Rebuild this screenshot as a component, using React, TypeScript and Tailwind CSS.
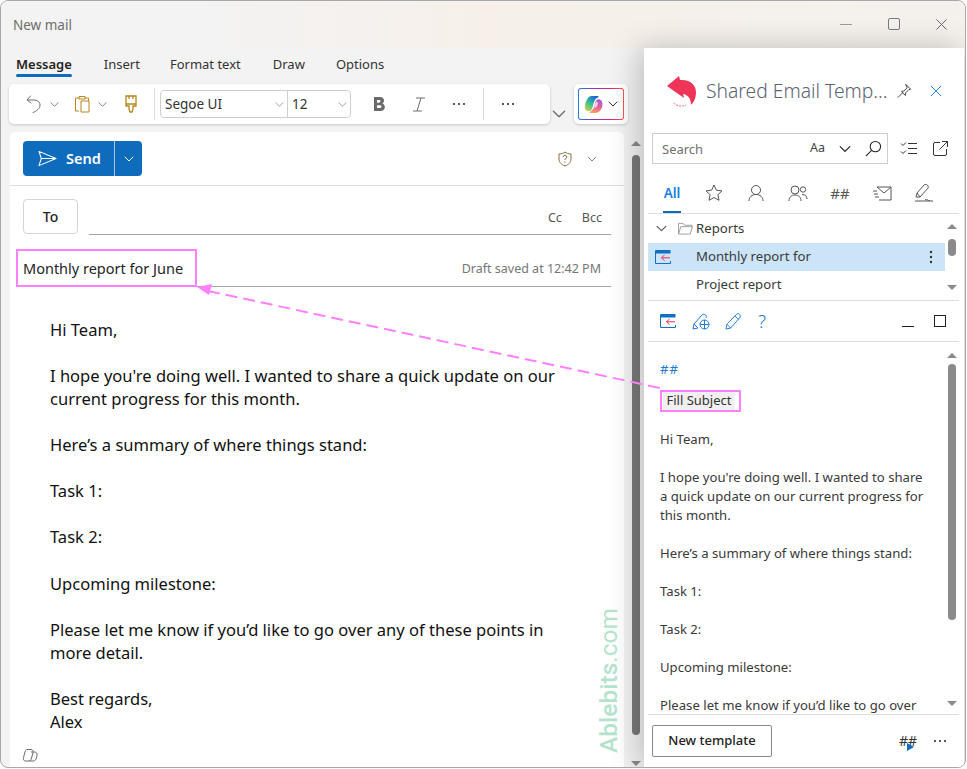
import React from "react";

const font = "font-['Noto_Sans','Open_Sans',sans-serif]";

const Chevron = ({ className = "", size = 10, color = "#707070" }: { className?: string; size?: number; color?: string }) => (
  <svg viewBox="0 0 10 10" width={size} height={size} className={className} fill="none" stroke={color} strokeWidth="1">
    <path d="m1 3 4 4 4-4" strokeLinecap="round" strokeLinejoin="round" />
  </svg>
);

const Logo = () => (
  <svg viewBox="0 0 32 34" width="32" height="34">
    <path d="M1 12 13 2l1 4c10-1 16 5 16 12 0 6-2 10-5 13 0-5-2-10-8-11l1 4Z" fill="#ee3558" />
    <path d="M8 29c2 3 8 4 12 2" fill="none" stroke="#f28a9c" strokeWidth="1.200" strokeDasharray="2 1" />
  </svg>
);

const Copilot = () => (
  <svg viewBox="0 0 20 20" width="19" height="19">
    <defs>
      <linearGradient id="cpa" x1="0" y1="1" x2="0.7" y2="0">
        <stop offset="0" stopColor="#e8d23a" />
        <stop offset="0.5" stopColor="#38c28e" />
        <stop offset="1" stopColor="#1666d8" />
      </linearGradient>
      <linearGradient id="cpb" x1="0.6" y1="0" x2="0.4" y2="1">
        <stop offset="0" stopColor="#a855d8" />
        <stop offset="0.55" stopColor="#e8629a" />
        <stop offset="1" stopColor="#f7a15a" />
      </linearGradient>
    </defs>
    <path d="M8 1h6c1.500 0 2 1 1 1.500-3 .5-4.500 4-5.500 8.500-.7 3-2 6-4.500 6-3 0-4.500-2.500-4-5.500C1.500 7 4 1 8 1Z" fill="url(#cpa)" />
    <path d="M15 4.500c2.500 0 4.500 2 4.500 5 0 5-3.500 9.500-7.500 9.500H7c-1 0-1.300-1-.5-1.500 3-1.500 4-4 5-8 .5-2.500 1.500-5 3.500-5Z" fill="url(#cpb)" />
    <path d="M12.500 7.500c1-1 2.500 0 2 2-.6 2.500-2 4.500-3.500 4 0-2 .8-4.500 1.500-6Z" fill="#fff" opacity="0.75" />
  </svg>
);

const TemplateIcon = () => (
  <svg viewBox="0 0 16 15" width="16" height="15" fill="none">
    <path d="M.5 13.500V.5h15M.5 13.500h15V11" stroke="#1170c4" />
    <path d="M.5 1h15v2.500H.5Z" fill="#1170c4" />
    <path d="M15 7.800H6.500M9.500 5 6.500 7.800l3 2.800" stroke="#e8344f" />
  </svg>
);

const Dots = ({ color = "#333" }: { color?: string }) => (
  <svg viewBox="0 0 14 4" width="14" height="4" fill={color}>
    <circle cx="2" cy="2" r="1.100" />
    <circle cx="7" cy="2" r="1.100" />
    <circle cx="12" cy="2" r="1.100" />
  </svg>
);

function Toolbar() {
  return (
    <div className="flex items-start pl-[8px] pr-[16px]">
      <div className="flex h-[40px] w-[541px] items-center rounded-[5px] bg-white shadow-[0_1px_3px_rgba(0,0,0,0.18)]">
        <svg viewBox="0 0 16 18" width="16" height="18" className="ml-[17px]" fill="none" stroke="#6e6e6e" strokeWidth="1">
          <path d="M4.500 1 1 5l4 3M1.500 5H8c3 0 6 1.500 6 5 0 3.500-3 6-7 7.500" strokeLinecap="round" strokeLinejoin="round" />
        </svg>
        <Chevron className="ml-[8px]" size={9} />
        <svg viewBox="0 0 15 18" width="15" height="18" className="ml-[16px]" fill="none" stroke="#b8861a" strokeWidth="1">
          <path d="M4 3H.5v13H4M10 3h3.500v3M4 1.500h6V4H4Z" />
          <path d="M6 6h8v11H6Z" />
        </svg>
        <Chevron className="ml-[8px]" size={9} />
        <svg viewBox="0 0 12 18" width="12" height="18" className="ml-[18px]" fill="none" stroke="#b8861a" strokeWidth="1.300">
          <path d="M1 1h10v8H1ZM4 1v3M8 1v3M1 9v2h3v3l1 3h2l1-3v-3h3V9" />
        </svg>
        <div className="ml-[17px] h-[32px] w-px bg-[#dcdcdc]" />
        <div className="ml-[5px] flex h-[28px] w-[191px] items-center rounded-[4px] border border-[#cfcfcf]">
          <div className="flex h-full w-[127px] items-center justify-between border-r border-[#cfcfcf] pl-[4px] pr-[3px] text-[13.500px] text-[#333]">
            Segoe UI
            <Chevron size={9} color="#9a9a9a" />
          </div>
          <div className="flex h-full flex-1 items-center justify-between pl-[4px] pr-[3px] text-[13.500px] text-[#333]">
            12
            <Chevron size={9} color="#9a9a9a" />
          </div>
        </div>
        <svg viewBox="0 0 12 14" width="12" height="14" className="ml-[22px]" fill="#6a6a6a">
          <path fillRule="evenodd" d="M1 0h5.500C9.500 0 11 1.400 11 3.500c0 1.200-.6 2.300-1.500 2.900 1.300.6 2.300 1.900 2.300 3.500 0 2.500-1.800 4.100-4.500 4.100H1Zm3 3v2.700h2c.9 0 1.500-.6 1.500-1.400S6.900 3 6 3Zm0 5.200V11h3c1 0 1.600-.6 1.600-1.400 0-.8-.6-1.400-1.600-1.400Z" />
        </svg>
        <svg viewBox="0 0 14 15" width="14" height="15" className="ml-[27px]" fill="none" stroke="#6e6e6e" strokeWidth="1">
          <path d="M4 1h9M1 14h9M9 1 5 14" />
        </svg>
        <div className="ml-[26px] flex"><Dots /></div>
        <div className="ml-[17px] h-[32px] w-px bg-[#dcdcdc]" />
        <div className="ml-[17px] flex"><Dots /></div>
      </div>
      <Chevron className="ml-[2px] mt-[23px]" size={14} />
      <div className="ml-[8px] grid h-[40px] w-[54px] place-items-center rounded-[5px] bg-white shadow-[0_1px_3px_rgba(0,0,0,0.18)]">
        <div className="h-[32px] w-[46px] rounded-[3px] bg-[linear-gradient(90deg,#1b80e0,#7d3bc0,#d4247e,#f25c4a)] p-px">
          <div className="flex h-full items-center gap-[5px] rounded-[2px] bg-white pl-[5px]">
            <Copilot />
            <Chevron size={10} color="#333" />
          </div>
        </div>
      </div>
    </div>
  );
}

const bodyLines = [
  "Hi Team,",
  "",
  "I hope you're doing well. I wanted to share a quick update on our",
  "current progress for this month.",
  "",
  "Here’s a summary of where things stand:",
  "",
  "Task 1:",
  "",
  "Task 2:",
  "",
  "Upcoming milestone:",
  "",
  "Please let me know if you’d like to go over any of these points in",
  "more detail.",
  "",
  "Best regards,",
  "Alex",
];

function MessageCard() {
  return (
    <div className="relative mt-[8px] ml-[9px] flex h-[636px] w-[614px] flex-col rounded-t-[5px] bg-white">
      <div className="flex h-[54px] items-center border-b border-[#dedede] pl-[13px] pr-[27px]">
        <div className="flex h-[35px] w-[119px] rounded-[4px] bg-[#0f6cbd] text-white">
          <div className="flex flex-1 items-center gap-[9px] border-r border-[#a8c8e6] pl-[15px] text-[14.500px] font-semibold">
            <svg viewBox="0 0 20 17" width="19" height="17" fill="none" stroke="#fff" strokeWidth="1.100">
              <path d="M1 1 19 8.500 1 16l2.500-7.500Zm2.500 7.500H19" strokeLinejoin="round" />
            </svg>
            Send
          </div>
          <div className="grid w-[27px] place-items-center">
            <Chevron size={10} color="#fff" />
          </div>
        </div>
        <div className="flex-1" />
        <svg viewBox="0 0 14 16" width="14" height="16" fill="none">
          <path d="M7 1c1.500 1.200 3.500 2 6 2v5c0 3.500-2.500 5.700-6 7-3.500-1.300-6-3.500-6-7V3c2.500 0 4.500-.8 6-2Z" stroke="#8a6d3b" />
          <path d="M5.300 6c0-2.200 3.500-2.200 3.500 0 0 1.300-1.800 1.300-1.800 2.800M7 10.500v1" stroke="#555" />
        </svg>
        <Chevron className="ml-[15px]" size={10} color="#6b87b0" />
      </div>

      <div className="flex h-[50px] items-start px-[13px] pt-[13px]">
        <div className="grid h-[35px] w-[55px] place-items-center rounded-[4px] border border-[#d4d4d4] text-[14px] font-medium text-[#242424]">
          To
        </div>
        <div className="ml-[11px] flex h-[36px] flex-1 items-center justify-end gap-[20px] border-b border-[#a5a5a5] pr-[9px] pt-[4px] text-[12.500px] text-[#555]">
          <span>Cc</span>
          <span>Bcc</span>
        </div>
      </div>

      <div className="mx-[13px] mt-[10px] flex h-[41px] items-center justify-between border-b border-[#a5a5a5] pr-[10px] pt-[6px]">
        <span className="text-[14.500px] text-[#242424]">Monthly report for June</span>
        <span className="pt-[1px] text-[12.500px] text-[#767676]">Draft saved at 12:42 PM</span>
      </div>

      <div className="pl-[40px] pt-[31px] text-[16.550px] leading-[23px] text-[#111]">
        {bodyLines.map((l, i) => (
          <div key={i} className="h-[23.050px] whitespace-nowrap">{l}</div>
        ))}
      </div>

      <svg viewBox="0 0 16 16" width="16" height="16" className="absolute bottom-[5px] left-[12px]" fill="none" stroke="#6a6a6a">
        <path d="M5 2.500h4c2 0 2.500 2 2 3.500l-2 6.500c-.4 1-1.500 1.500-2.500 1.500H3.500C1.500 14 1 12 1.500 10.500L3 5c.3-1.500 1-2.500 2-2.500Z" />
        <path d="M9 5h3.500c2 0 3 1.500 2.500 3.500l-1 3.500c-.4 1.200-1.500 2-2.500 2H7" />
      </svg>
    </div>
  );
}

const Scrollbar = ({ thumb, className = "" }: { thumb: string; className?: string }) => (
  <div className={`flex flex-col items-center ${className}`}>
    <div className="h-0 w-0 border-x-[5px] border-b-[5px] border-x-transparent border-b-[#8a8a8a]" />
    <div className={`w-[8px] rounded-full bg-[#8a8a8a] ${thumb}`} />
    <div className="flex-1" />
    <div className="h-0 w-0 border-x-[5px] border-t-[5px] border-x-transparent border-t-[#8a8a8a]" />
  </div>
);

const panelLines = [
  "Hi Team,",
  "",
  "I hope you're doing well. I wanted to share",
  "a quick update on our current progress for",
  "this month.",
  "",
  "Here’s a summary of where things stand:",
  "",
  "Task 1:",
  "",
  "Task 2:",
  "",
  "Upcoming milestone:",
  "",
  "Please let me know if you’d like to go over",
];

function SidePanel() {
  return (
    <div className="relative flex h-[720px] w-[320px] shrink-0 flex-col bg-white text-[#3a3a3a] shadow-[-6px_0_28px_rgba(0,0,0,0.22)]">
      {/* header */}
      <div className="flex h-[85px] items-center">
        <div className="ml-[22px] mt-[1px]"><Logo /></div>
        <span className="ml-[8px] w-[190px] whitespace-nowrap text-[19.300px] font-light leading-none text-[#5a6472]">
          Shared Email Temp...
        </span>
        <svg viewBox="0 0 18 18" width="16" height="16" fill="none" stroke="#333">
          <path d="M11 1.500 16.500 7l-2 .5-3.500 3.500-.5 3L6 9.500l3-.5 3.500-3.500ZM7.500 11 2 16.500" strokeLinejoin="round" />
        </svg>
        <svg viewBox="0 0 14 14" width="12" height="12" className="ml-[18px]" fill="none" stroke="#1f7ad0" strokeWidth="1.100">
          <path d="m1 1 12 12M13 1 1 13" />
        </svg>
      </div>

      {/* search */}
      <div className="flex items-center pl-[8px]">
        <div className="flex h-[31px] w-[236px] items-center border border-[#cdcdcd] pl-[9px] pr-[5px] text-[13px]">
          <span className="pt-[2px] text-[#707070]">Search</span>
          <div className="flex-1" />
          <span className="text-[12.500px] text-[#444]">Aa</span>
          <Chevron className="ml-[14px]" size={12} color="#222" />
          <svg viewBox="0 0 18 18" width="17" height="17" className="ml-[14px]" fill="none" stroke="#222" strokeWidth="1.100">
            <circle cx="11" cy="7" r="5.500" />
            <path d="M7 11 1 17" />
          </svg>
        </div>
        <svg viewBox="0 0 17 15" width="17" height="15" className="ml-[12px]" fill="none" stroke="#333">
          <path d="m1 2.500 2 2 3-3M1 10.500l2 2 3-3M8 2.500h9M8 7.500h9M8 12.500h9" />
        </svg>
        <svg viewBox="0 0 15 15" width="15" height="15" className="ml-[16px]" fill="none" stroke="#333">
          <path d="M7 1.500H2A1.500 1.500 0 0 0 .5 3v10A1.500 1.500 0 0 0 2 14.500h10a1.500 1.500 0 0 0 1.500-1.500V8M9 .5h5.500V6M14.500.5l-8 8" />
        </svg>
      </div>

      {/* category tabs */}
      <div className="ml-[4px] mt-[13px] flex h-[37px] w-[311px] items-center border-b border-[#dedede] pb-[4px] pl-[3px] text-[#555] [&>*]:flex [&>*]:w-[42px] [&>*]:justify-center">
        <div className="relative text-[13.500px] font-semibold text-[#1480e0]">
          All
          <span className="absolute bottom-[-10px] left-[12px] h-[2px] w-[18px] bg-[#0f6cbd]" />
        </div>
        <div>
          <svg viewBox="0 0 18 18" width="18" height="18" fill="none" stroke="#555">
            <path d="m9 1 2.400 5.200 5.600.7-4.100 3.800 1.100 5.600L9 13.500l-5 2.800 1.100-5.600L1 6.900l5.600-.7Z" strokeLinejoin="round" />
          </svg>
        </div>
        <div>
          <svg viewBox="0 0 18 18" width="18" height="18" fill="none" stroke="#555">
            <circle cx="9" cy="6" r="4.500" />
            <path d="M2 17c0-4 3-6.500 7-6.500S16 13 16 17" />
          </svg>
        </div>
        <div>
          <svg viewBox="0 0 20 18" width="20" height="18" fill="none" stroke="#555">
            <circle cx="7" cy="6" r="4" />
            <path d="M1 17c0-4 2.500-6 6-6s6 2 6 6" />
            <circle cx="15" cy="5.500" r="2.700" />
            <path d="M14 10.500c3 0 5 1.500 5 4.500" />
          </svg>
        </div>
        <div className="text-[15px]">##</div>
        <div>
          <svg viewBox="0 0 20 16" width="20" height="16" fill="none" stroke="#555">
            <path d="M5 2h14v13H7M5 2l7 6 7-6M1 6h4M2 9h4M3 12h4" />
          </svg>
        </div>
        <div>
          <svg viewBox="0 0 20 18" width="20" height="18" fill="none" stroke="#555">
            <path d="m2 13 1-4 7-8c1-.8 2.500-.8 3.500.2s1 2.400 0 3.500L6 13ZM3 9l3 4M1 17h18M11 15c1 2 2 0 3 1s1 1 2 0" />
          </svg>
        </div>
      </div>

      {/* template tree */}
      <div className="ml-[4px] flex h-[87px] w-[311px] border-b border-[#dedede]">
        <div className="w-[297px] shrink-0 text-[13.200px]">
          <div className="flex h-[29px] items-center pl-[8px]">
            <Chevron size={11} color="#555" />
            <svg viewBox="0 0 16 14" width="15" height="13" className="ml-[11px]" fill="none" stroke="#999">
              <path d="M.5 13V1.500h5l1.500 2h8V5M.5 13l2.500-8h12.500l-2.500 8Z" />
            </svg>
            <span className="ml-[3px]">Reports</span>
          </div>
          <div className="flex h-[28px] items-center bg-[#cce4f7] pl-[7px] pr-[12px]">
            <TemplateIcon />
            <span className="ml-[25px]">Monthly report for</span>
            <div className="flex-1" />
            <svg viewBox="0 0 4 14" width="4" height="14" fill="#333">
              <circle cx="2" cy="2" r="1.200" />
              <circle cx="2" cy="7" r="1.200" />
              <circle cx="2" cy="12" r="1.200" />
            </svg>
          </div>
          <div className="flex h-[28px] items-center pl-[48px]">Project report</div>
        </div>
        <Scrollbar thumb="mt-[10px] h-[17px]" className="ml-[1px] w-[12px] pb-[10px] pt-[10px]" />
      </div>

      {/* actions */}
      <div className="ml-[4px] flex h-[41px] w-[311px] items-center border-b border-[#dedede]">
        <div className="ml-[12px]"><TemplateIcon /></div>
        <svg viewBox="0 0 18 18" width="18" height="18" className="ml-[16px]" fill="none" stroke="#1f7ad0">
          <path d="m1 17 1-5 8-9c1-1 2.500-1 3.500 0s1 2 .5 3M1 17l5-1M2 12l4 4" />
          <circle cx="12.500" cy="12.500" r="4.500" />
          <path d="M8 12.500h9M12.500 8v9" />
        </svg>
        <svg viewBox="0 0 18 18" width="17" height="17" className="ml-[15px]" fill="none" stroke="#1f7ad0">
          <path d="m1 17 1-5 10-10.500c1-1 2.500-1 3.500 0s1 2.500 0 3.500L6 16ZM2 12l4 4M10.500 3l4 4" />
        </svg>
        <span className="ml-[16px] text-[19px] font-light text-[#1f7ad0]">?</span>
        <div className="flex-1" />
        <div className="mr-[20px] mt-[11px] h-px w-[12px] bg-[#222]" />
        <div className="mr-[13px] h-[12px] w-[12px] border border-[#222]" />
      </div>

      {/* preview */}
      <div className="ml-[4px] flex h-[373px] w-[311px] overflow-hidden border-b border-[#dedede]">
        <div className="w-[298px] shrink-0 pl-[12px] text-[13.150px] leading-[19px] text-[#3a3a3a]">
          <div className="mt-[18px] h-[19px] tracking-[1px] text-[#1f7ad0]">##</div>
          <div className="ml-[3px] mt-[12px] flex h-[19px] w-[72px] items-center justify-center whitespace-nowrap bg-[#f0f0f0] text-[13px] text-[#333]">
            Fill Subject
          </div>
          <div className="mt-[20px]">
            {panelLines.map((l, i) => (
              <div key={i} className="h-[19px] whitespace-nowrap">{l}</div>
            ))}
          </div>
        </div>
        <Scrollbar thumb="mt-[6px] h-[256px]" className="w-[12px] pb-[8px] pt-[11px]" />
      </div>

      {/* footer */}
      <div className="flex h-[52px] items-center pl-[8px]">
        <div className="grid h-[32px] w-[120px] place-items-center rounded-[2px] border border-[#8a8a8a] text-[13px] font-medium text-[#222]">
          New template
        </div>
        <div className="relative ml-[127px] text-[14px] leading-none text-[#333]">
          ##
          <div className="absolute bottom-[-3px] left-[8px] h-0 w-0 border-y-[4px] border-l-[7px] border-y-transparent border-l-[#0f6cbd]" />
        </div>
        <div className="ml-[16px] flex"><Dots /></div>
      </div>
    </div>
  );
}

export default function App() {
  return (
    <div className={`relative h-[769px] w-[967px] overflow-hidden bg-white ${font}`}>
      <div className="flex h-[768px] w-[966px] flex-col overflow-hidden rounded-[8px] border border-[#a8a8a8] bg-[#f3f3f3]">
        {/* title bar */}
        <div className="flex h-[47px] shrink-0 items-start bg-[linear-gradient(90deg,#f3f3f3_20%,#f7f0ea_50%,#f4f1ec_100%)] pl-[12px] pt-[15px]">
          <span className="text-[13.500px] leading-[18px] text-[#6d6d6d]">New mail</span>
          <div className="flex-1" />
          <div className="mr-[18px] flex items-center gap-[36px] pt-[2px]">
            <div className="h-px w-[12px] bg-[#9a9a9a]" />
            <div className="h-[12px] w-[12px] rounded-[2px] border border-[#7a7a7a]" />
            <svg viewBox="0 0 11 11" width="11" height="11" fill="none" stroke="#666">
              <path d="m.5.500 10 10M10.500.500l-10 10" />
            </svg>
          </div>
        </div>

        <div className="flex min-h-0 flex-1">
          {/* compose column */}
          <div className="w-[643px] shrink-0">
            <div className="flex h-[36px] items-center pb-[3px] pl-[15px] text-[13px] text-[#333]">
              <span className="relative font-semibold text-[#242424]">
                Message
                <span className="absolute bottom-[-3px] left-0 h-[3px] w-full rounded-full bg-[#0f6cbd]" />
              </span>
              <span className="ml-[32px]">Insert</span>
              <span className="ml-[30px]">Format text</span>
              <span className="ml-[32px]">Draw</span>
              <span className="ml-[31px]">Options</span>
            </div>
            <Toolbar />
            <div className="flex">
              <MessageCard />
              <Scrollbar thumb="mt-[9px] h-[580px] bg-[#7a7a7a]!" className="ml-[6px] mt-[8px] h-[634px] w-[12px] pt-[9px]" />
            </div>
          </div>
          <SidePanel />
        </div>
      </div>

      {/* callout annotation */}
      <div className="absolute left-[16px] top-[249px] h-[38px] w-[181px] border-2 border-[#ff80ff]" />
      <div className="absolute left-[660px] top-[390px] h-[22px] w-[81px] border-2 border-[#ff80ff]" />
      <svg viewBox="0 0 967 769" width="967" height="769" className="absolute left-0 top-0" fill="none">
        <path d="M208 291 660 388" stroke="#ff80ff" strokeWidth="2" strokeDasharray="12 6" />
        <path d="m197 287 15-3-3 11Z" fill="#ff80ff" />
      </svg>
      <div className="absolute left-[595px] top-[608px] rotate-180 text-[24.500px] leading-[27px] text-[#b3e3cd] [writing-mode:vertical-rl] font-['Roboto',sans-serif]">
        <span className="font-medium">Ablebits</span><span className="font-normal">.com</span>
      </div>
    </div>
  );
}
